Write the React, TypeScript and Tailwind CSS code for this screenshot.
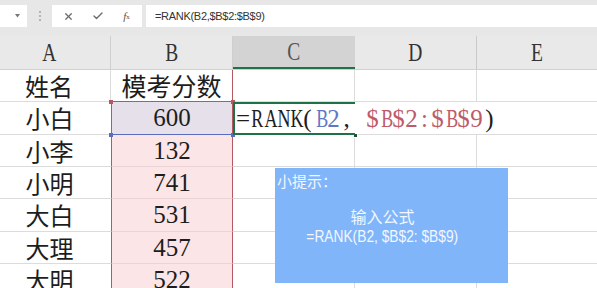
import React from "react";
import { X, Check } from "lucide-react";

const serif = { fontFamily: '"Liberation Serif", "Noto Sans CJK SC", serif' };
const cjk = { fontFamily: '"Noto Sans CJK SC", "Liberation Serif", sans-serif' };
const sans = { fontFamily: '"Liberation Sans", "Noto Sans CJK SC", sans-serif' };

const rows: { h: number; a: string; b: string }[] = [
  { h: 32, a: "姓名", b: "模考分数" },
  { h: 33, a: "小白", b: "600" },
  { h: 32, a: "小李", b: "132" },
  { h: 32, a: "小明", b: "741" },
  { h: 33, a: "大白", b: "531" },
  { h: 32, a: "大理", b: "457" },
  { h: 33, a: "大明", b: "522" },
];

function Mono({ text, color }: { text: string; color: string }) {
  const wide = "RANKB";
  return (
    <>
      {text.split("").map((c, i) => (
        <span key={i} className="inline-block w-[13px] shrink-0 text-center" style={{ color }}>
          <span className={wide.includes(c) ? "inline-block scale-x-[0.72]" : "inline-block"}>
            {c === " " ? "\u00a0" : c}
          </span>
        </span>
      ))}
    </>
  );
}

export default function App() {
  return (
    <div className="relative w-[597px] h-[288px] overflow-hidden bg-white text-[#1d1d1d]">
      {/* formula bar */}
      <div className="h-[36px] bg-[#e7e7e7] flex items-start pt-[5px]">
        <div className="w-[27px] h-[22px] bg-white flex items-center justify-end pr-[7px]">
          <svg width="5" height="4" viewBox="0 0 5 4"><path d="M0 0 L5 0 L2.5 3.5 Z" fill="#777" /></svg>
        </div>
        <div className="w-[25px] h-[22px] flex flex-col items-center justify-center gap-[2px]">
          <span className="w-[2px] h-[2px] bg-[#b5b5b5]" />
          <span className="w-[2px] h-[2px] bg-[#b5b5b5]" />
          <span className="w-[2px] h-[2px] bg-[#b5b5b5]" />
        </div>
        <div className="w-[90px] h-[22px] bg-white flex items-center">
          <div className="w-[32px] flex justify-center"><X size={11} strokeWidth={2.6} color="#6b6b6b" /></div>
          <div className="w-[27px] flex justify-center"><Check size={12} strokeWidth={2.8} color="#6b6b6b" /></div>
          <div className="w-[31px] flex justify-center text-[11px] italic text-[#555]" style={serif}>
            f<span className="text-[7px] not-italic mt-[4px]">x</span>
          </div>
        </div>
        <div className="w-[4px]" />
        <div className="flex-1 h-[22px] bg-white flex items-center pl-[9px] text-[11px] text-[#333] tracking-[-0.3px]" style={sans}>
          =RANK(B2,$B$2:$B$9)
        </div>
      </div>

      {/* column headers */}
      <div className="flex h-[34px] bg-[#e9e9e9] border-b border-[#d0d0d0] text-[26px] text-[#333]" style={serif}>
        <div className="w-[111px] border-r border-[#cfcfcf] flex items-center justify-center pr-[12px]">
          <span className="inline-block scale-x-[0.75]">A</span>
        </div>
        <div className="w-[122px] border-r border-[#cfcfcf] flex items-center justify-center">
          <span className="inline-block scale-x-[0.75]">B</span>
        </div>
        <div className="w-[122px] bg-[#d3d3d3] border-b-2 border-[#217346] flex items-center justify-center text-[#555]">
          <span className="inline-block scale-x-[0.75]">C</span>
        </div>
        <div className="w-[122px] border-r border-[#c9c9c9] flex items-center justify-center">
          <span className="inline-block scale-x-[0.75]">D</span>
        </div>
        <div className="flex-1 flex items-center justify-center">
          <span className="inline-block scale-x-[0.75]">E</span>
        </div>
      </div>

      {/* rows */}
      {rows.map((r, i) => {
        const inRange = i >= 1;
        const active = i === 1;
        return (
          <div key={i} className="flex" style={{ height: r.h }}>
            <div
              className={`w-[111px] border-b border-[#dcdcdc] flex items-center justify-center pr-[12px] text-[24px] ${inRange ? "" : "border-r"}`}
              style={cjk}
            >
              {r.a}
            </div>
            <div
              className={`w-[122px] flex items-center justify-center ${
                i === 0
                  ? "border-r border-r-[#b65862] border-b border-b-[#b65862] text-[25px]"
                  : active
                  ? "bg-[#e5e0ea] border-l border-r border-l-[#b65862] border-r-[#b65862] border-b border-b-[#5a6cbc] text-[25px]"
                  : "bg-[#fbe5e7] border-l border-r border-l-[#b65862] border-r-[#b65862] border-b border-b-[#ecd4d6] text-[25px]"
              }`}
              style={i === 0 ? cjk : serif}
            >
              {r.b}
            </div>
            {active ? (
              <div className="w-[122px] border-t-2 border-b-2 border-l-2 border-[#1f7246] flex items-center text-[25px] relative z-10 pl-[1px]" style={serif}>
                <div className="flex shrink-0 whitespace-nowrap">
                  <Mono text="=RANK(" color="#1d1d1d" />
                  <Mono text="B2" color="#6277c4" />
                  <Mono text=", " color="#1d1d1d" />
                  <Mono text="$B$2:$B$9" color="#c05a68" />
                  <Mono text=")" color="#1d1d1d" />
                </div>
              </div>
            ) : (
              <div className="w-[122px] border-r border-b border-[#dcdcdc]" />
            )}
            <div className={`w-[122px] border-b border-[#dcdcdc] ${active ? "" : "border-r"}`} />
            <div className="flex-1 border-b border-[#dcdcdc]" />
          </div>
        );
      })}

      {/* range corner handles */}
      <span className="absolute left-[109px] top-[100px] w-[4px] h-[4px] bg-[#b65862]" />
      <span className="absolute left-[231px] top-[100px] w-[4px] h-[4px] bg-[#b65862]" />
      <span className="absolute left-[109px] top-[133px] w-[4px] h-[4px] bg-[#5a6cbc]" />
      <span className="absolute left-[231px] top-[133px] w-[4px] h-[4px] bg-[#5a6cbc]" />
      <span className="absolute left-[353px] top-[133px] w-[5px] h-[5px] bg-[#1f4f33] border border-white" />

      {/* tooltip */}
      <div className="absolute left-[275px] top-[168px] w-[233px] h-[115px] bg-[#80b5fa] text-[#f3f7ff]" style={cjk}>
        <div className="pl-[2px] pt-[3px] text-[15px] leading-[20px]">小提示：</div>
        <div className="pr-[18px] mt-[14px] flex flex-col items-center">
          <div className="text-[16px] leading-[22px]">输入公式</div>
          <div className="text-[16px] leading-[20px]" style={sans}>
            <span className="inline-block scale-x-[0.86]">=RANK(B2, $B$2: $B$9)</span>
          </div>
        </div>
      </div>
    </div>
  );
}
